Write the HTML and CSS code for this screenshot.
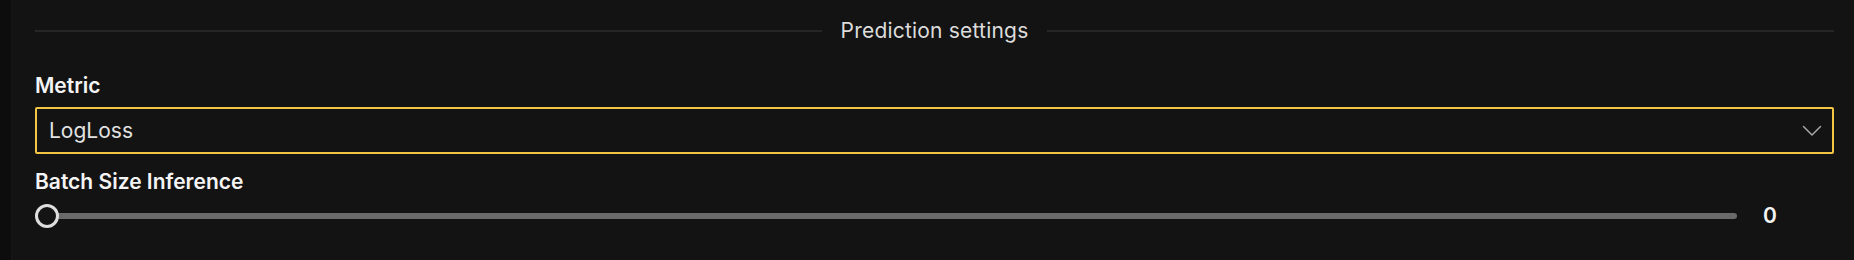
FILE: index.html
```html
<!DOCTYPE html>
<html lang="en">
<head>
<meta charset="utf-8">
<title>Prediction settings</title>
<link rel="stylesheet" href="styles.css">
</head>
<body>
<div class="page">
  <div class="edge"></div>
  <main class="panel">
    <div class="section-head">
      <span class="rule"></span>
      <span class="section-title">Prediction settings</span>
      <span class="rule"></span>
    </div>

    <label class="field-label" for="metric">Metric</label>
    <div class="select" id="metric" role="combobox" aria-expanded="false">
      <span class="select-value">LogLoss</span>
      <svg class="chevron" width="20" height="12" viewBox="0 0 20 12" aria-hidden="true">
        <polyline points="1.5,1.5 10,10 18.5,1.5" fill="none" stroke="#a6a6a6" stroke-width="1.5" stroke-linecap="round" stroke-linejoin="round"/>
      </svg>
    </div>

    <label class="field-label field-label--second" for="batch">Batch Size Inference</label>
    <div class="slider-row">
      <input class="slider" id="batch" type="range" min="0" max="100" value="0">
      <span class="slider-value">0</span>
    </div>
  </main>
</div>
</body>
</html>
```

FILE: styles.css
```css
html, body {
  margin: 0;
  padding: 0;
  background: #131313;
}

body {
  width: 1854px;
  height: 260px;
  overflow: hidden;
  font-family: "Inter", "Noto Sans", sans-serif;
  color: #f2f2f2;
}

.page {
  display: flex;
  height: 260px;
}

.edge {
  width: 11px;
  flex: none;
  background: #0d0d0d;
  border-right: 1px solid #171717;
}

.panel {
  flex: 1;
  display: flex;
  flex-direction: column;
  padding: 19px 20px 0 23px;
}

.section-head {
  display: flex;
  align-items: center;
  height: 24px;
}

.rule {
  flex: 1;
  height: 2px;
  background: #262626;
}

.section-title {
  margin: 0 19px;
  font-size: 21px;
  line-height: 24px;
  font-weight: 400;
  color: #dcdcdc;
  letter-spacing: 0.2px;
}

.field-label {
  display: block;
  margin-top: 31px;
  font-size: 21px;
  line-height: 24px;
  font-weight: 600;
  color: #f4f4f4;
}

.field-label--second {
  margin-top: 16px;
}

.select {
  margin-top: 9px;
  height: 47px;
  box-sizing: border-box;
  border: 2px solid #f2c544;
  border-radius: 2px;
  padding: 0 10px 0 12px;
  display: flex;
  align-items: center;
  justify-content: space-between;
}

.select-value {
  font-size: 21px;
  line-height: 24px;
  color: #e2e2e2;
}

.chevron {
  display: block;
}

.slider-row {
  margin-top: 10px;
  height: 24px;
  display: flex;
  align-items: center;
}

.slider {
  -webkit-appearance: none;
  appearance: none;
  flex: 1;
  margin: 0;
  height: 24px;
  background: transparent;
}

.slider::-webkit-slider-runnable-track {
  height: 6px;
  border-radius: 3px;
  background: #6a6a6a;
}

.slider::-webkit-slider-thumb {
  -webkit-appearance: none;
  appearance: none;
  width: 24px;
  height: 24px;
  margin-top: -9px;
  box-sizing: border-box;
  border-radius: 50%;
  border: 3px solid #dedede;
  background: #141414;
}

.slider-value {
  flex: none;
  width: 97px;
  box-sizing: border-box;
  padding-left: 26px;
  font-size: 21px;
  line-height: 24px;
  font-weight: 600;
  color: #f4f4f4;
}
```
